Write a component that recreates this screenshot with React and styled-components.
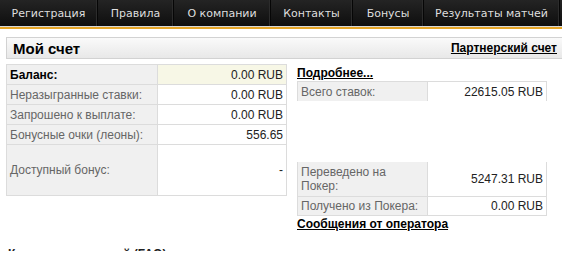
import styled, { createGlobalStyle } from 'styled-components';

const GlobalStyle = createGlobalStyle`
    html, body {
        margin: 0;
        padding: 0;
        background: #fff;
        overflow: hidden;
    }
    body {
        font-family: "Liberation Sans", Arial, sans-serif;
        font-size: 12px;
        color: #222;
    }
`;

const menu = [
    { title: 'Регистрация', w: 97 },
    { title: 'Правила', w: 75 },
    { title: 'О компании', w: 96 },
    { title: 'Контакты', w: 81 },
    { title: 'Бонусы', w: 70 },
    { title: 'Результаты матчей', w: 135 },
];

const App = () => {
    return (
        <Page>
            <GlobalStyle />
            <Nav>
                {menu.map((m) => (
                    <NavItem key={m.title} $w={m.w}>{m.title}</NavItem>
                ))}
            </Nav>
            <GoldLine />
            <Content>
                <Header>
                    <h1>Мой счет</h1>
                    <Link href="#">Партнерский счет</Link>
                </Header>
                <Columns>
                    <LeftTable>
                        <tbody>
                            <tr>
                                <Label $strong>Баланс:</Label>
                                <Value $hl>0.00 RUB</Value>
                            </tr>
                            <tr>
                                <Label>Неразыгранные ставки:</Label>
                                <Value>0.00 RUB</Value>
                            </tr>
                            <tr>
                                <Label>Запрошено к выплате:</Label>
                                <Value>0.00 RUB</Value>
                            </tr>
                            <tr>
                                <Label>Бонусные очки (леоны):</Label>
                                <Value>556.65</Value>
                            </tr>
                            <TallRow>
                                <Label>Доступный бонус:</Label>
                                <Value>-</Value>
                            </TallRow>
                        </tbody>
                    </LeftTable>
                    <Right>
                        <Link href="#">Подробнее...</Link>
                        <StakeTable>
                            <tbody>
                                <tr>
                                    <Label>Всего ставок:</Label>
                                    <Value>22615.05 RUB</Value>
                                </tr>
                            </tbody>
                        </StakeTable>
                        <PokerTable>
                            <tbody>
                                <tr>
                                    <Label>Переведено на Покер:</Label>
                                    <Value>5247.31 RUB</Value>
                                </tr>
                                <tr>
                                    <Label>Получено из Покера:</Label>
                                    <Value>0.00 RUB</Value>
                                </tr>
                            </tbody>
                        </PokerTable>
                        <Link href="#">Сообщения от оператора</Link>
                    </Right>
                </Columns>
                <Faq>
                    <span>Как получить новый (FAQ)</span>
                </Faq>
            </Content>
        </Page>
    );
};

const Page = styled.div`
    width: 562px;
`;

const Nav = styled.div`
    display: flex;
    height: 26px;
    background: linear-gradient(#242424, #0e0e0e);
    border-bottom: 1px solid #d8d8d8;
`;

const NavItem = styled.div`
    width: ${(p) => p.$w}px;
    flex-shrink: 0;
    display: flex;
    align-items: center;
    justify-content: center;
    color: #dedede;
    font-family: "DejaVu Sans", Tahoma, sans-serif;
    font-size: 11px;
    border-right: 1px solid #060606;
    box-shadow: inset -1px 0 0 #2c2c2c;
`;

const GoldLine = styled.div`
    height: 2px;
    background: #e6a526;
`;

const Content = styled.div`
    padding: 8px 0 0 6px;
`;

const Header = styled.div`
    display: flex;
    justify-content: space-between;
    align-items: center;
    height: 20px;
    padding: 0 5px 0 6px;
    border: 1px solid #d2d2d2;
    border-right: none;
    background: linear-gradient(#fafafa, #e8e8e8);
    h1 {
        margin: 0;
        font-size: 15px;
        font-weight: bold;
        color: #000;
    }
`;

const Link = styled.a`
    color: #000;
    font-weight: bold;
    font-size: 12px;
    line-height: 14px;
    text-decoration: underline;
`;

const Columns = styled.div`
    display: flex;
    align-items: flex-start;
    gap: 10px;
    margin-top: 5px;
`;

const Table = styled.table`
    border-collapse: collapse;
    table-layout: fixed;
    td {
        border: 1px solid #dcdcdc;
        padding: 0 3px;
        height: 19px;
        line-height: 14px;
    }
`;

const LeftTable = styled(Table)`
    width: 281px;
    td:first-child {
        width: 144px;
    }
`;

const TallRow = styled.tr`
    td {
        height: 50px;
    }
`;

const Label = styled.td`
    background: #f0f0f0;
    color: ${(p) => (p.$strong ? '#000' : '#666')};
    font-weight: ${(p) => (p.$strong ? 'bold' : 'normal')};
`;

const Value = styled.td`
    background: ${(p) => (p.$hl ? '#f7f7e6' : '#fff')};
    text-align: right;
`;

const Right = styled.div`
    width: 250px;
    display: flex;
    flex-direction: column;
    align-items: flex-start;
    padding-top: 2px;
`;

const StakeTable = styled(Table)`
    width: 250px;
    margin-top: 1px;
    td:first-child {
        width: 123px;
    }
    td {
        border-bottom: none;
    }
`;

const PokerTable = styled(Table)`
    width: 250px;
    margin-top: 61px;
    margin-bottom: 1px;
    td:first-child {
        width: 123px;
    }
    td {
        height: 18px;
    }
    tr:first-child td {
        border-top: none;
        height: 34px;
    }
`;

const Faq = styled.div`
    margin-top: 17px;
    height: 3px;
    overflow: hidden;
    padding-left: 2px;
    span {
        display: block;
        margin-top: -1px;
        font-weight: bold;
        font-size: 12px;
        line-height: 14px;
    }
`;

export default App;
